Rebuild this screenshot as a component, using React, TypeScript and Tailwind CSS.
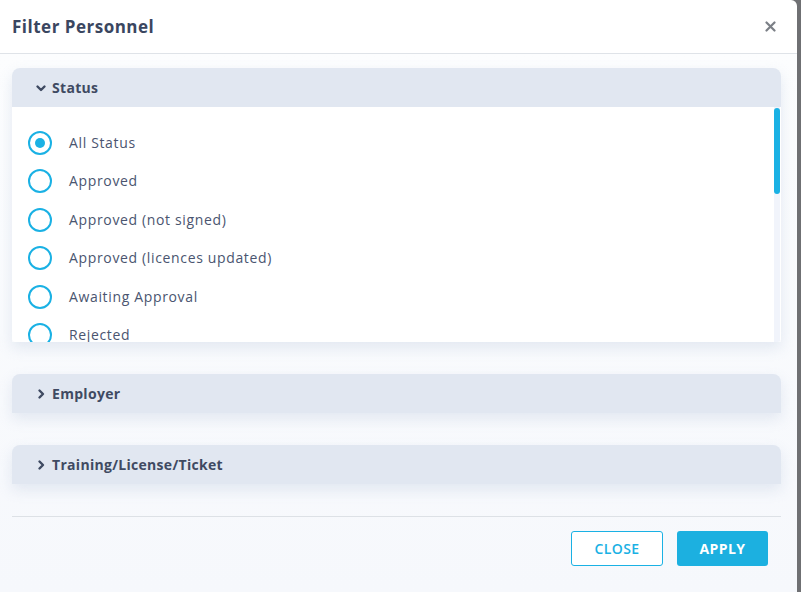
import React from "react";

const items = [
  "All Status",
  "Approved",
  "Approved (not signed)",
  "Approved (licences updated)",
  "Awaiting Approval",
  "Rejected",
  "Expired",
  "Suspended",
  "Inactive",
];

function Chevron({ down }: { down?: boolean }) {
  return (
    <svg width="12" height="12" viewBox="0 0 12 12" className="shrink-0">
      {down ? (
        <path d="M2.5 4.5 L6 8 L9.5 4.5" fill="none" stroke="#3f4a62" strokeWidth="2.4" strokeLinecap="round" strokeLinejoin="round" />
      ) : (
        <path d="M4.5 2.5 L8 6 L4.5 9.5" fill="none" stroke="#3f4a62" strokeWidth="2.4" strokeLinecap="round" strokeLinejoin="round" />
      )}
    </svg>
  );
}

export default function App() {
  return (
    <div
      className="w-[801px] h-[592px] bg-[#6f7073] flex overflow-hidden"
      style={{ fontFamily: '"Open Sans", "Noto Sans", sans-serif' }}
    >
      <div className="w-[797px] h-[592px] bg-white flex flex-col rounded-tr-md">
        <div className="h-[54px] shrink-0 flex items-center justify-between pl-3 pr-[21px] border-b border-[#dfe3e8]">
          <span className="text-[17px] font-bold text-[#3a4660] tracking-[0.5px]">Filter Personnel</span>
          <svg width="11" height="11" viewBox="0 0 11 11">
            <path d="M1.5 1.5 L9.5 9.5 M9.5 1.5 L1.5 9.5" stroke="#7b7f86" strokeWidth="2.2" strokeLinecap="round" />
          </svg>
        </div>
        <div className="flex-1 flex flex-col bg-gradient-to-b from-[#fcfdfe] to-[#f6f8fc] px-3 pt-[14px]">
          <div className="w-[769px] rounded-t-lg shadow-[0_6px_14px_rgba(200,210,228,0.45)]">
            <div className="h-[39px] bg-[#e1e7f1] rounded-t-lg flex items-center gap-[5px] pl-[23px]">
              <Chevron down />
              <span className="text-[14px] font-bold text-[#3f4a62] tracking-[0.3px]">Status</span>
            </div>
            <div className="relative h-[235px] bg-white overflow-hidden rounded-b-sm">
              <div className="flex flex-col pt-6">
                {items.map((t, i) => (
                  <div key={t} className="h-[38.4px] flex items-start gap-[17px] pl-4">
                    <div className="w-6 h-6 rounded-full border-2 border-[#1ab1e4] flex items-center justify-center">
                      {i === 0 && <div className="w-[10px] h-[10px] rounded-full bg-[#1ab1e4]" />}
                    </div>
                    <span className="text-[14px] text-[#4a5570] leading-6 tracking-[0.65px]">{t}</span>
                  </div>
                ))}
              </div>
              <div className="absolute right-[1px] top-0 h-[235px] w-[6px] bg-[#f1f4fb]" />
              <div className="absolute right-[1px] top-[1px] h-[86px] w-[6px] rounded-full bg-[#1ab1e4]" />
            </div>
          </div>
          <div className="mt-8 w-[769px] h-[39px] bg-[#e1e7f1] rounded-t-lg flex items-center gap-[5px] pl-[23px] shadow-[0_6px_14px_rgba(200,210,228,0.45)]">
            <Chevron />
            <span className="text-[14px] font-bold text-[#3f4a62] tracking-[0.3px]">Employer</span>
          </div>
          <div className="mt-8 w-[769px] h-[39px] bg-[#e1e7f1] rounded-t-lg flex items-center gap-[5px] pl-[23px] shadow-[0_6px_14px_rgba(200,210,228,0.45)]">
            <Chevron />
            <span className="text-[14px] font-bold text-[#3f4a62] tracking-[0.3px]">Training/License/Ticket</span>
          </div>
          <div className="mt-8 w-[769px] border-t border-[#dde1e6]" />
          <div className="w-[769px] flex justify-end gap-[14px] pt-[14px] pr-[13px]">
            <button className="w-[92px] h-[35px] border border-[#1ab1e4] rounded-[3px] bg-white text-[#1ab1e4] text-[14px] font-semibold tracking-[0.4px]">
              CLOSE
            </button>
            <button className="w-[91px] h-[35px] rounded-[3px] bg-[#1cb0e0] text-white text-[14px] font-bold tracking-[0.4px]">
              APPLY
            </button>
          </div>
        </div>
      </div>
    </div>
  );
}
